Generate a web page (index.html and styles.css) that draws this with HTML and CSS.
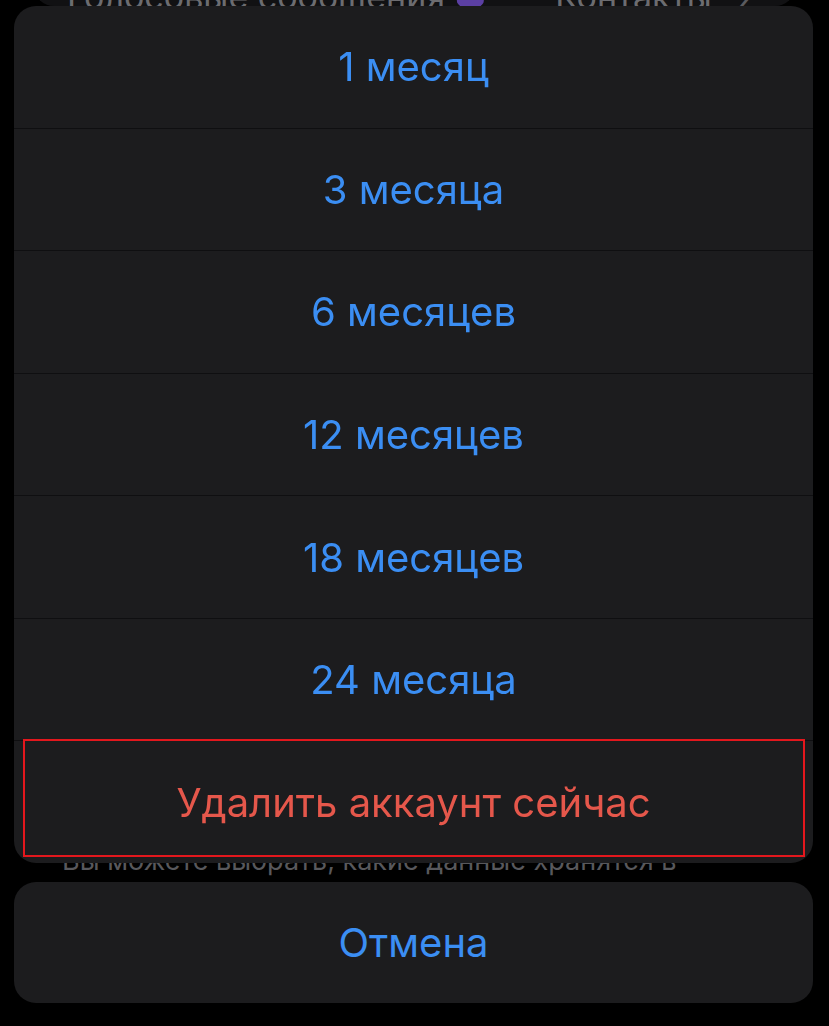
FILE: index.html
```html
<!DOCTYPE html>
<html lang="ru">
<head>
<meta charset="utf-8">
<title>Удаление аккаунта</title>
<link rel="stylesheet" href="styles.css">
</head>
<body>
  <main class="page">
    <section class="group">
      <div class="row">
        <span class="row-title">Голосовые сообщения</span>
        <span class="row-icon"></span>
        <span class="row-value">Контакты</span>
        <span class="chevron">›</span>
      </div>
    </section>
    <p class="footnote">Вы можете выбрать, какие данные хранятся в облаке Telegram, а какие только на устройстве.</p>
  </main>

  <div class="overlay">
    <div class="sheet">
      <button class="action">1 месяц</button>
      <button class="action">3 месяца</button>
      <button class="action">6 месяцев</button>
      <button class="action">12 месяцев</button>
      <button class="action">18 месяцев</button>
      <button class="action">24 месяца</button>
      <button class="action destructive">Удалить аккаунт сейчас</button>
      <span class="highlight"></span>
    </div>
    <button class="cancel">Отмена</button>
  </div>
</body>
</html>
```

FILE: styles.css
```css
html, body {
  margin: 0;
  padding: 0;
  background: #000;
  height: 100%;
  overflow: hidden;
}

body {
  font-family: Inter, "Noto Sans", "Liberation Sans", sans-serif;
  color: #6b6b70;
}

/* settings page under the dimmed action sheet */
.page {
  display: flex;
  flex-direction: column;
}

.group {
  margin: -40px 34px 0 34px;
  background: #111113;
  border-radius: 0 0 20px 20px;
}

.row {
  height: 46px;
  display: flex;
  align-items: flex-end;
  padding: 0 0 0 33px;
  font-size: 34px;
  line-height: 1;
}

.row-title,
.row-value,
.chevron {
  color: #6c6c70;
  transform: translateY(8px);
}

.row-icon {
  width: 22px;
  height: 22px;
  margin-left: 20px;
  background: #5b3fa3;
  border-radius: 5px;
  transform: rotate(45deg) translateY(8px);
}

.row-value {
  margin-left: 68px;
}

.chevron {
  margin-left: 26px;
  color: #5a5a5e;
}

.footnote {
  margin: 837px 0 0 62px;
  width: 660px;
  font-size: 27px;
  line-height: 36px;
  color: #58585c;
}

/* action sheet */
.overlay {
  position: fixed;
  inset: 0;
  padding: 6px 16px 23px 14px;
  display: flex;
  flex-direction: column;
  gap: 19px;
}

.sheet {
  position: relative;
  height: 857px;
  display: flex;
  flex-direction: column;
  background: #1c1c1e;
  border-radius: 22px;
  overflow: hidden;
}

.action,
.cancel {
  font-family: Inter, "Noto Sans", "Liberation Sans", sans-serif;
  font-size: 40px;
  color: #3b8ef3;
  background: transparent;
  border: 0;
  padding: 0;
  margin: 0;
  cursor: pointer;
}

.action {
  flex: 1;
  border-top: 1px solid #0f0f11;
}

.action:first-child {
  border-top: 0;
}

.destructive {
  color: #e5574b;
}

.highlight {
  position: absolute;
  left: 9px;
  right: 8px;
  bottom: 6px;
  height: 114px;
  border: 2px solid #e3171d;
  pointer-events: none;
}

.cancel {
  height: 121px;
  background: #1c1c1e;
  border-radius: 22px;
}
```
